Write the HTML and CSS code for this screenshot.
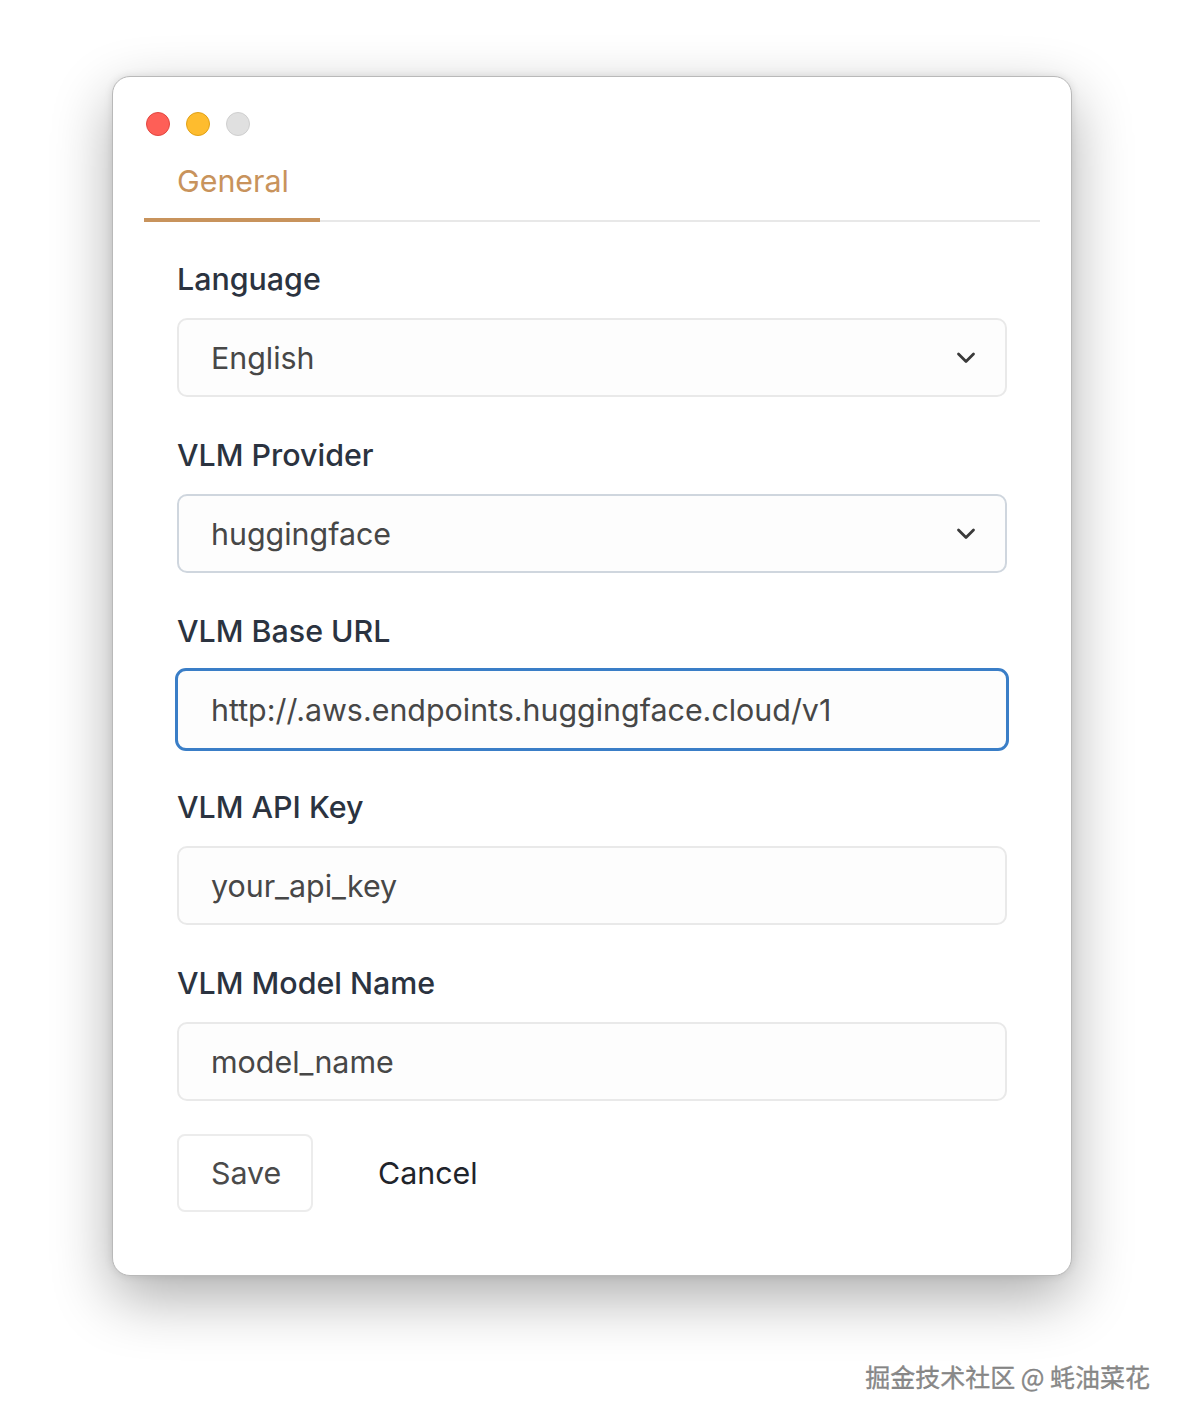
FILE: index.html
```html
<!DOCTYPE html>
<html>
<head>
<meta charset="utf-8">
<link rel="stylesheet" href="styles.css">
</head>
<body>
<div class="page">
  <div class="window">
    <div class="lights">
      <span class="light red"></span>
      <span class="light yellow"></span>
      <span class="light grey"></span>
    </div>
    <div class="tabs">
      <div class="tab active">General</div>
    </div>
    <form class="form">
      <div class="field">
        <div class="label">Language</div>
        <div class="control select">
          <span class="value">English</span>
          <svg class="chev" viewBox="0 0 20 12" width="20" height="12"><path d="M2.5 2 L10 9.5 L17.5 2" fill="none" stroke="#3a3a3a" stroke-width="2.8" stroke-linecap="round" stroke-linejoin="round"/></svg>
        </div>
      </div>
      <div class="field">
        <div class="label">VLM Provider</div>
        <div class="control select hover">
          <span class="value">huggingface</span>
          <svg class="chev" viewBox="0 0 20 12" width="20" height="12"><path d="M2.5 2 L10 9.5 L17.5 2" fill="none" stroke="#3a3a3a" stroke-width="2.8" stroke-linecap="round" stroke-linejoin="round"/></svg>
        </div>
      </div>
      <div class="field">
        <div class="label">VLM Base URL</div>
        <div class="control focus"><span class="value">http://.aws.endpoints.huggingface.cloud/v1</span></div>
      </div>
      <div class="field">
        <div class="label">VLM API Key</div>
        <div class="control"><span class="value">your_api_key</span></div>
      </div>
      <div class="field">
        <div class="label">VLM Model Name</div>
        <div class="control"><span class="value">model_name</span></div>
      </div>
      <div class="actions">
        <button type="button" class="btn save">Save</button>
        <button type="button" class="btn cancel">Cancel</button>
      </div>
    </form>
  </div>
</div>
<div class="watermark">掘金技术社区 @ 蚝油菜花</div>
</body>
</html>
```
FILE: styles.css
```css
html, body {
  margin: 0;
  padding: 0;
  background: #ffffff;
}
body {
  font-family: Inter, "Noto Sans", "Noto Sans CJK SC", sans-serif;
  width: 1184px;
  height: 1424px;
  overflow: hidden;
}
.page {
  padding: 76px 112px 0 112px;
}
.window {
  width: 960px;
  height: 1200px;
  box-sizing: border-box;
  background: #ffffff;
  border-radius: 18px;
  border: 1px solid #b9b9b9;
  box-shadow: 0 22px 60px rgba(0,0,0,0.32), 0 0 8px rgba(0,0,0,0.10);
  padding: 35px 31px 0 31px;
}
.lights {
  display: flex;
  gap: 16px;
  padding-left: 2px;
  height: 24px;
}
.light {
  width: 24px;
  height: 24px;
  border-radius: 50%;
  box-sizing: border-box;
}
.red { background: #fe5f57; border: 1px solid #e2463f; }
.yellow { background: #febc2e; border: 1px solid #e1a116; }
.grey { background: #e0e0e0; border: 1px solid #cfcfcf; }
.tabs {
  margin-top: 20px;
  display: flex;
  border-bottom: 2px solid #e8e8e8;
}
.tab {
  font-size: 30.4px;
  line-height: 40px;
  padding: 5px 33px 17px 33px;
  width: 176px;
  box-sizing: border-box;
  color: #c8935c;
  margin-bottom: -2px;
}
.tab.active {
  border-bottom: 4px solid #c8935c;
}
.form {
  padding: 37px 33px 0 33px;
}
.field {
  margin-bottom: 38px;
}
.label {
  font-size: 30.4px;
  font-weight: 500;
  line-height: 40px;
  color: #2b3340;
  margin-bottom: 19px;
}
.control {
  height: 79px;
  box-sizing: border-box;
  border: 2px solid #e9e9e9;
  border-radius: 10px;
  background: #fdfdfd;
  display: flex;
  align-items: center;
  padding: 0 32px;
  font-size: 30.4px;
  color: #474747;
}
.control .value { flex: 1; }
.control.hover { border-color: #cfd6de; }
.control.focus {
  border: 3px solid #3a7ec7;
  padding: 0 31px 0 33px;
  margin: -2px -2px -2px -2px;
  height: 83px;
  border-radius: 11px;
}
.chev { margin-right: -3px; }
.actions {
  display: flex;
  gap: 31px;
  margin-top: -5px;
}
.btn {
  font-family: Inter, "Noto Sans", sans-serif;
  font-size: 30.4px;
  height: 78px;
  padding: 0 32px;
  border-radius: 8px;
  background: #ffffff;
  cursor: pointer;
}
.btn.save {
  border: 2px solid #ececec;
  color: #4a4a4a;
  width: 136px;
}
.btn.cancel {
  border: 2px solid transparent;
  color: #1f242b;
}
.watermark {
  text-align: right;
  padding-right: 34px;
  margin-top: 84px;
  font-family: "Noto Sans CJK SC", sans-serif;
  font-size: 25px;
  line-height: 32px;
  color: #8a8a8a;
  text-shadow: 1px 1px 0 #ffffff, -1px -1px 0 #ffffff;
  -webkit-text-stroke: 0.3px #777;
}
```
